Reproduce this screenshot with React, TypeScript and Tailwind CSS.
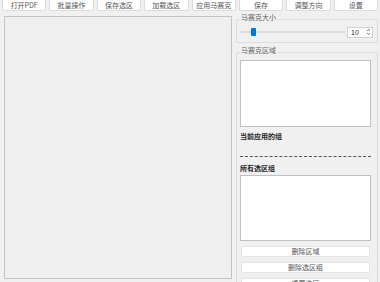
import { ChevronUp, ChevronDown } from "lucide-react";

const font = "font-['Noto_Sans_CJK_SC','Liberation_Sans',sans-serif]";

const toolbar = ["打开PDF", "批量操作", "保存选区", "加载选区", "应用马赛克", "保存", "调整方向", "设置"];

const Btn = ({ label, className = "" }: { label: string; className?: string }) => (
  <div
    className={`flex items-center justify-center bg-white border border-[#dcdcdc] rounded-[2px] text-[7px] leading-none text-[#555] ${className}`}
  >
    {label}
  </div>
);

const App = () => {
  return (
    <div className={`w-[380px] h-[282px] bg-[#f0f0f0] overflow-hidden ${font}`}>
      {/* Toolbar */}
      <div className="grid grid-cols-8 gap-[3px] px-[2px] h-[12px] -mt-[1px]">
        {toolbar.map((t) => (
          <Btn key={t} label={t} className="h-[12px]" />
        ))}
      </div>

      <div className="flex mt-[5px]">
        {/* Canvas area */}
        <div className="ml-[4px] w-[228px] h-[263px] border border-[#c4c4c4] bg-[#efefef]" />

        {/* Side panel */}
        <div className="ml-[4px] w-[142px] flex flex-col">
          {/* Mosaic size */}
          <div className="relative mt-[3px] border border-[#dcdcdc] rounded-[2px] h-[24px]">
            <span className="absolute -top-[6px] left-[3px] bg-[#f0f0f0] px-[1px] text-[7px] leading-none text-[#666]">
              马赛克大小
            </span>
            <div className="flex items-center h-full pl-[3px] pr-[4px] pt-[2px]">
              <div className="relative flex-1 h-[2px] bg-[#dadada] rounded-full">
                <div className="absolute left-[11px] -top-[3px] w-[5px] h-[8px] bg-[#0078d7] rounded-[1px]" />
              </div>
              <div className="ml-[2px] w-[26px] h-[11px] bg-white border border-[#d0d0d0] flex items-center justify-between pl-[3px] pr-[1px]">
                <span className="text-[7px] leading-none text-[#222]">10</span>
                <div className="flex flex-col">
                  <ChevronUp className="w-[5px] h-[4px] text-[#333]" strokeWidth={5} />
                  <ChevronDown className="w-[5px] h-[4px] text-[#333]" strokeWidth={5} />
                </div>
              </div>
            </div>
          </div>

          {/* Mosaic region */}
          <div className="relative mt-[9px] border border-[#dcdcdc] rounded-[2px] h-[240px] px-[3px] pt-[7px]">
            <span className="absolute -top-[6px] left-[3px] bg-[#f0f0f0] px-[1px] text-[7px] leading-none text-[#666]">
              马赛克区域
            </span>
            <div className="h-[67px] bg-white border border-[#c0c0c0] mr-[3px]" />
            <div className="mt-[6px] text-[7px] leading-none font-bold text-[#222]">当前应用的组</div>
            <div className="mt-[16px] border-t border-dashed border-[#555] mr-[3px]" />
            <div className="mt-[8px] text-[7px] leading-none font-bold text-[#222]">所有选区组</div>
            <div className="mt-[3px] h-[66px] bg-white border border-[#c0c0c0] mr-[3px]" />
            <div className="mt-[5px] flex flex-col gap-[5px] pl-[1px] pr-[4px]">
              <Btn label="删除区域" className="h-[11px] border-[#e4e4e4]" />
              <Btn label="删除选区组" className="h-[11px] border-[#e4e4e4]" />
              <Btn label="重置选区" className="h-[11px] border-[#e4e4e4]" />
            </div>
          </div>
        </div>
      </div>
    </div>
  );
};

export default App;
